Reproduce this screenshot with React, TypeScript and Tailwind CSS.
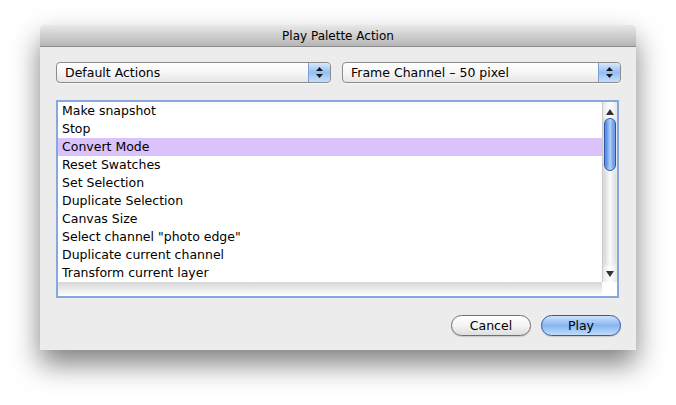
import React from "react";

const items = [
  "Make snapshot",
  "Stop",
  "Convert Mode",
  "Reset Swatches",
  "Set Selection",
  "Duplicate Selection",
  "Canvas Size",
  'Select channel "photo edge"',
  "Duplicate current channel",
  "Transform current layer",
];

function Stepper() {
  return (
    <div className="w-[22px] h-full rounded-r-[4px] border-l border-[#7f9fd6] bg-gradient-to-b from-[#d8e8fc] via-[#93bff4] to-[#c4ddfb] flex flex-col items-center justify-center gap-[3px]">
      <svg width="7" height="4" viewBox="0 0 7 4">
        <path d="M3.5 0 L7 4 L0 4 Z" fill="#1a1a1a" />
      </svg>
      <svg width="7" height="4" viewBox="0 0 7 4">
        <path d="M0 0 L7 0 L3.5 4 Z" fill="#1a1a1a" />
      </svg>
    </div>
  );
}

function Popup({ label, width }: { label: string; width: string }) {
  return (
    <div
      className={`${width} h-[21px] rounded-[4px] border border-[#8c8c8c] bg-gradient-to-b from-white via-[#f6f6f6] to-[#e6e6e6] flex items-stretch shadow-[0_1px_0_rgba(255,255,255,0.6)]`}
    >
      <div className="flex-1 flex items-center pl-[8px] pt-[1px] text-[12.5px] text-black leading-none">
        {label}
      </div>
      <Stepper />
    </div>
  );
}

export default function App() {
  return (
    <div
      className="w-[676px] h-[405px] bg-white pt-[25px] pl-[40px]"
      style={{ fontFamily: '"DejaVu Sans", "Noto Sans", sans-serif' }}
    >
      <div className="w-[596px] h-[325px] bg-[#ececec] rounded-t-[5px] shadow-[0_14px_28px_rgba(0,0,0,0.5)] flex flex-col">
        {/* title bar */}
        <div className="h-[22px] rounded-t-[5px] border-b border-[#8a8a8a] bg-gradient-to-b from-[#e8e8e8] to-[#b6b6b6] flex items-center justify-center pt-[1px] text-[12px] text-black">
          Play Palette Action
        </div>

        <div className="flex flex-col pl-[16px] pr-[15px] pt-[15px]">
          {/* popups */}
          <div className="flex gap-[11px]">
            <Popup label="Default Actions" width="w-[275px]" />
            <Popup label="Frame Channel – 50 pixel" width="w-[279px]" />
          </div>

          {/* list */}
          <div className="mt-[17px] w-[563px] h-[198px] border-2 border-[#86a8de] bg-white flex flex-col">
            <div className="flex h-[180px]">
              <div className="flex-1 flex flex-col">
                {items.map((it, i) => (
                  <div
                    key={it}
                    className={`h-[18px] flex items-center pl-[4px] pt-[1px] text-[12.5px] text-black leading-none ${
                      i === 2 ? "bg-[#d9c3fa]" : ""
                    }`}
                  >
                    {it}
                  </div>
                ))}
              </div>
              {/* scrollbar */}
              <div className="w-[15px] h-full flex flex-col border-l border-[#c8c8c8] bg-gradient-to-r from-[#dcdcdc] via-white to-[#e4e4e4]">
                <div className="h-[16px] flex items-end justify-center pb-[3px] bg-gradient-to-r from-[#e8e8e8] via-white to-[#e8e8e8]">
                  <svg width="8" height="6" viewBox="0 0 8 6">
                    <path d="M4 0 L8 6 L0 6 Z" fill="#333" />
                  </svg>
                </div>
                <div className="mx-[1px] h-[53px] rounded-full border border-[#2a56a8] bg-gradient-to-r from-[#3a72d6] via-[#b2d3fa] to-[#4d84e0] shadow-[inset_0_0_2px_rgba(255,255,255,0.6)]" />
                <div className="flex-1 mx-[1px] rounded-b-full bg-gradient-to-r from-[#d8d8d8] via-[#fbfbfb] to-[#dedede]" />
                <div className="h-[16px] flex items-center justify-center bg-gradient-to-r from-[#e8e8e8] via-white to-[#e8e8e8]">
                  <svg width="8" height="6" viewBox="0 0 8 6">
                    <path d="M0 0 L8 0 L4 6 Z" fill="#333" />
                  </svg>
                </div>
              </div>
            </div>
            <div className="flex-1 flex">
              <div className="flex-1 bg-gradient-to-b from-[#d6d6d6] to-white" />
              <div className="w-[15px] bg-white" />
            </div>
          </div>

          {/* buttons */}
          <div className="mt-[17px] flex justify-end gap-[10px]">
            <div className="w-[80px] h-[21px] rounded-full border border-[#707070] bg-gradient-to-b from-white via-[#f4f4f4] to-[#dedede] flex items-center justify-center pt-[1px] text-[12.5px] text-black shadow-[0_1px_1px_rgba(0,0,0,0.15)]">
              Cancel
            </div>
            <div className="w-[80px] h-[21px] rounded-full border border-[#34579e] bg-gradient-to-b from-[#cfe2fb] via-[#86b6f1] to-[#c2dcfb] flex items-center justify-center pt-[1px] text-[12.5px] text-black shadow-[0_1px_1px_rgba(0,0,0,0.15)]">
              Play
            </div>
          </div>
        </div>
      </div>
    </div>
  );
}
